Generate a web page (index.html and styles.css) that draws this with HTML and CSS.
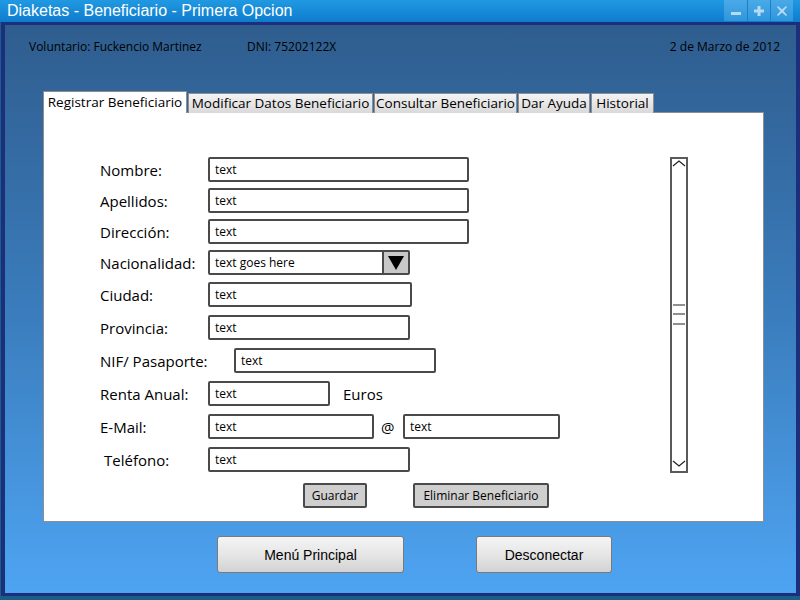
FILE: index.html
```html
<!DOCTYPE html>
<html lang="es">
<head>
<meta charset="utf-8">
<title>Diaketas - Beneficiario - Primera Opcion</title>
<link rel="stylesheet" href="styles.css">
</head>
<body>
<div class="window">
  <div class="titlebar">
    <span class="title">Diaketas - Beneficiario - Primera Opcion</span>
    <div class="wbtns">
      <span class="wbtn"><svg width="12" height="12" viewBox="0 0 12 12"><rect x="1" y="7" width="10" height="3" fill="#b6daf3"/></svg></span>
      <span class="wbtn"><svg width="12" height="12" viewBox="0 0 12 12"><path d="M4.5 1h3v3.5H11v3H7.5V11h-3V7.5H1v-3h3.5z" fill="#b6daf3"/></svg></span>
      <span class="wbtn"><svg width="12" height="12" viewBox="0 0 12 12"><path d="M2 1l4 3.5L10 1l1 1-3.5 4L11 10l-1 1-4-3.5L2 11l-1-1 3.5-4L1 2z" fill="#b6daf3"/></svg></span>
    </div>
  </div>
  <div class="frame">
    <div class="header">
      <span class="vol">Voluntario: Fuckencio Martinez</span>
      <span class="dni">DNI: 75202122X</span>
      <span class="date">2 de Marzo de 2012</span>
    </div>
    <div class="tabs">
      <span class="tab active t1">Registrar Beneficiario</span>
      <span class="tab t2">Modificar Datos Beneficiario</span>
      <span class="tab t3">Consultar Beneficiario</span>
      <span class="tab t4">Dar Ayuda</span>
      <span class="tab t5">Historial</span>
    </div>
    <div class="panel">
      <div class="panel-body">
        <div class="form">
          <div class="row"><span class="label">Nombre:</span><span class="input w261">text</span></div>
          <div class="row"><span class="label">Apellidos:</span><span class="input w261">text</span></div>
          <div class="row"><span class="label">Dirección:</span><span class="input w261">text</span></div>
          <div class="row"><span class="label">Nacionalidad:</span>
            <span class="combo"><span class="combo-text">text goes here</span><span class="combo-btn"><svg width="18" height="16" viewBox="0 0 18 16"><path d="M1 1h16L9 15z" fill="#000"/></svg></span></span>
          </div>
          <div class="row r5"><span class="label">Ciudad:</span><span class="input w204">text</span></div>
          <div class="row r6"><span class="label">Provincia:</span><span class="input w202">text</span></div>
          <div class="row r6"><span class="label nif">NIF/ Pasaporte:</span><span class="input w202">text</span></div>
          <div class="row r6"><span class="label">Renta Anual:</span><span class="input w122">text</span><span class="euros">Euros</span></div>
          <div class="row r6"><span class="label">E-Mail:</span><span class="input w166">text</span><span class="at">@</span><span class="input w157">text</span></div>
          <div class="row r6"><span class="label tel">Teléfono:</span><span class="input w202">text</span></div>
        </div>
        <div class="scroll">
          <svg width="18" height="316" viewBox="0 0 18 316">
            <path d="M3 9l6-5 6 5" fill="none" stroke="#222" stroke-width="1.2"/>
            <path d="M3 304l6 5 6-5" fill="none" stroke="#222" stroke-width="1.2"/>
            <path d="M3 148h12M3 157h12M3 167h12" stroke="#222" stroke-width="1.2"/>
          </svg>
        </div>
      </div>
      <div class="actions">
        <span class="sbtn guardar">Guardar</span>
        <span class="sbtn eliminar">Eliminar Beneficiario</span>
      </div>
    </div>
    <div class="bottom">
      <span class="btn menu">Menú Principal</span>
      <span class="btn desc">Desconectar</span>
    </div>
  </div>
</div>
</body>
</html>
```

FILE: styles.css
```css
* { box-sizing: border-box; }
html, body { margin: 0; padding: 0; }
body { width: 800px; height: 600px; overflow: hidden; font-family: "Open Sans", "DejaVu Sans", sans-serif; }

.window { width: 800px; height: 600px; display: flex; flex-direction: column; background: #1a5f88; }

.titlebar {
  height: 22px; flex: none;
  background: linear-gradient(#2199e2, #0e7ccd);
  display: flex; align-items: center; justify-content: space-between;
  padding-left: 7px;
}
.title { font-family: "Liberation Sans", Arial, sans-serif; font-size: 16px; color: #fff; line-height: 22px; }
.wbtns { display: flex; align-self: flex-start; margin-right: 7px; }
.wbtn {
  width: 23px; height: 21px; display: flex; align-items: center; justify-content: center;
  background: linear-gradient(#4aaae8, #2f96dc);
  border-left: 1px solid #1b80c8;
}
.wbtn:first-child { border-left: none; }

.frame {
  flex: 1;
  margin: 0 0 4px 1px; width: 799px;
  border: 3px solid #1c2f7c;
  border-left-width: 4px; border-right-width: 4px;
  background: linear-gradient(#2f5d8e 0%, #3a7cbc 50%, #4ea4f2 100%);
  display: flex; flex-direction: column;
  padding-left: 38px;
}

.header {
  display: flex; align-items: center; height: 16px; margin-top: 13px;
  font-size: 12px; color: #000;
}
.vol { margin-left: -14px; width: 218px; }
.dni { flex: 1; }
.date { margin-right: 16px; }

.tabs { display: flex; align-items: flex-end; margin-top: 37px; height: 22px; position: relative; z-index: 1; }
.tab {
  height: 20px; font-size: 13.5px; line-height: 18px; text-align: center; white-space: nowrap;
  background: linear-gradient(#f4f4f4, #d9d9d9);
  border: 1px solid #8e8e8e; border-bottom: none; margin-right: 1px; color: #000;
}
.tab.active { height: 22px; background: #fff; line-height: 20px; }
.t1 { width: 144px; }
.t2 { width: 185px; }
.t3 { width: 143px; }
.t4 { width: 72px; }
.t5 { width: 63px; }

.panel {
  width: 721px; height: 410px; background: #fff; border: 1px solid #8e8e8e;
  margin-top: -1px; display: flex; flex-direction: column;
}
.panel-body { display: flex; padding: 44px 0 0 56px; }
.form { display: flex; flex-direction: column; gap: 6px; width: 570px; }
.row { display: flex; align-items: center; height: 25px; }
.row.r5 { margin-top: 1px; }
.row.r6 { margin-top: 2px; }
.label { width: 108px; font-size: 15px; color: #000; padding-top: 1px; }
.label.nif { width: 134px; }
.label.tel { padding-left: 4px; }
.input {
  height: 25px; border: 2px solid #4a4a4a; border-radius: 2px; background: #fff;
  font-size: 12px; line-height: 21px; padding-left: 5px; color: #000;
}
.w261 { width: 261px; }
.w204 { width: 204px; }
.w202 { width: 202px; }
.w122 { width: 122px; }
.w166 { width: 166px; }
.w157 { width: 157px; }
.euros { font-size: 15px; margin-left: 13px; }
.at { font-size: 15px; margin: 0 7px 0 7px; width: 15px; }

.combo { display: flex; width: 202px; height: 25px; border: 2px solid #4a4a4a; border-radius: 2px; }
.combo-text { flex: 1; font-size: 12px; line-height: 21px; padding-left: 5px; }
.combo-btn { width: 26px; background: #c8c8c8; border-left: 2px solid #4a4a4a; display: flex; align-items: center; justify-content: center; }

.scroll { width: 18px; height: 316px; border: 2px solid #5a5a5a; position: relative; }
.scroll svg { position: absolute; left: -2px; top: -2px; }

.actions { display: flex; gap: 46px; padding-left: 259px; margin-top: 10px; }
.sbtn {
  height: 25px; background: #cfcfcf; border: 2px solid #4a4a4a; border-radius: 2px;
  font-size: 12px; line-height: 21px; text-align: center;
}
.guardar { width: 64px; }
.eliminar { width: 136px; }

.bottom { display: flex; margin-top: 14px; padding-left: 174px; gap: 72px; }
.btn {
  height: 37px; border: 1px solid #7a7a7a; border-radius: 3px;
  background: linear-gradient(#f4f4f4, #e6e6e6 50%, #d2d2d2);
  font-family: "Liberation Sans", Arial, sans-serif; font-size: 14px; color: #000;
  display: flex; align-items: center; justify-content: center;
}
.menu { width: 187px; }
.desc { width: 136px; }
```
